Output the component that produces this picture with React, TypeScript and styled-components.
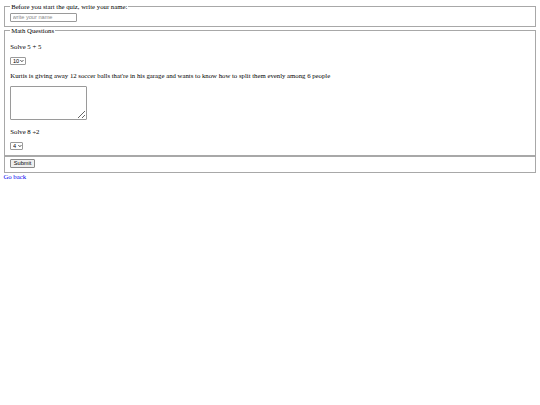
import React from "react";
import styled, { createGlobalStyle } from "styled-components";

// the page is drawn at a reduced scale, so every length goes through u()
const SCALE = 0.421875;
const u = (n: number) => `${(n * SCALE).toFixed(3)}px`;

const GlobalStyle = createGlobalStyle`
  body {
    margin: ${u(8)};
    background: #fff;
    font-family: "Liberation Serif", "Times New Roman", serif;
    font-size: ${u(16)};
    color: #000;
  }
`;

const Group = styled.fieldset`
  margin: 0 ${u(2)};
  padding: ${u(5.6)} ${u(12)} ${u(10.5)};
  border: 1px solid #a8a8a8;
  min-width: 0;
`;

const Legend = styled.legend`
  padding: 0 ${u(2)};
`;

const Question = styled.p`
  margin: ${u(16)} 0;
`;

const controlFont = `
  font-family: "Liberation Sans", Arial, sans-serif;
  font-size: ${u(13.33)};
`;

const NameInput = styled.input`
  ${controlFont}
  box-sizing: border-box;
  width: ${u(159)};
  height: ${u(21)};
  padding: 0 ${u(3)};
  border: 1px solid #9a9a9a;
  border-radius: 1px;
  &::placeholder {
    color: #8a8a8a;
  }
`;

const ChoiceWrap = styled.span`
  position: relative;
  display: inline-block;
  vertical-align: baseline;
`;

const Answer = styled.select<{ $w: number }>`
  ${controlFont}
  appearance: none;
  box-sizing: border-box;
  width: ${(p) => u(p.$w)};
  height: ${u(20)};
  padding: 0 0 0 ${u(4)};
  border: 1px solid #9a9a9a;
  border-radius: 1px;
  background: #fff;
  color: #000;
`;

const Arrow = styled.svg`
  position: absolute;
  right: ${u(4)};
  top: 50%;
  width: ${u(9)};
  height: ${u(6)};
  transform: translateY(-50%);
  pointer-events: none;
`;

const Working = styled.textarea`
  font-family: "Liberation Mono", monospace;
  font-size: ${u(13.33)};
  box-sizing: border-box;
  width: ${u(183)};
  height: ${u(82)};
  padding: ${u(2)};
  border: 1px solid #9a9a9a;
  border-radius: 1px;
`;

const SubmitButton = styled.button`
  ${controlFont}
  box-sizing: border-box;
  height: ${u(20)};
  padding: 0 ${u(6)};
  border: 1px solid #8a8a8a;
  border-radius: 1px;
  background: #efefef;
  color: #000;
`;

const BackLink = styled.a`
  color: #0000ee;
  text-decoration: underline;
`;

type ChoiceProps = { value: string; options: string[]; width: number };

const Choice = ({ value, options, width }: ChoiceProps) => (
  <ChoiceWrap>
    <Answer $w={width} defaultValue={value}>
      {options.map((o) => (
        <option key={o}>{o}</option>
      ))}
    </Answer>
    <Arrow viewBox="0 0 9 6">
      <polyline
        points="1,1 4.5,4.5 8,1"
        fill="none"
        stroke="#000"
        strokeWidth="1.8"
      />
    </Arrow>
  </ChoiceWrap>
);

const App = () => {
  return (
    <>
      <GlobalStyle />
      <form>
        <Group>
          <Legend>Before you start the quiz, write your name:</Legend>
          <NameInput type="text" placeholder="write your name" />
        </Group>
        <Group>
          <Legend>Math Questions</Legend>
          <Question>Solve 5 + 5</Question>
          <Choice value="10" options={["10", "5", "25"]} width={37} />
          <Question>
            Kurtis is giving away 12 soccer balls that're in his garage and
            wants to know how to split them evenly among 6 people
          </Question>
          <Working />
          <Question>Solve 8 ÷2</Question>
          <Choice value="4" options={["4", "6", "2"]} width={31} />
        </Group>
        <Group>
          <SubmitButton type="submit">Submit</SubmitButton>
        </Group>
      </form>
      <BackLink href="#">Go back</BackLink>
    </>
  );
};

export default App;
